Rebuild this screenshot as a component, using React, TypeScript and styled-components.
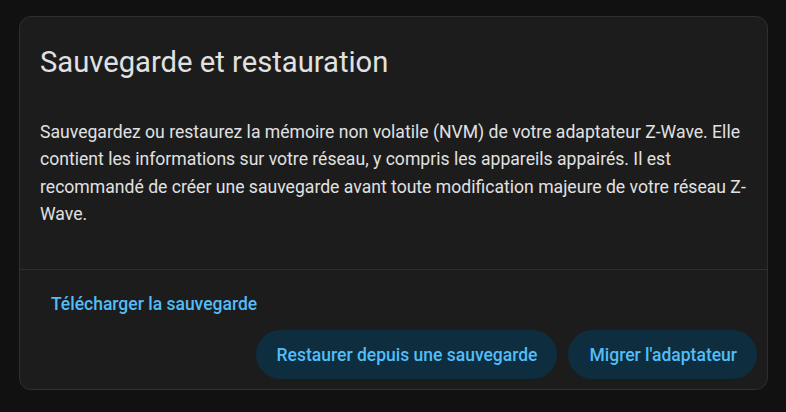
import styled, { createGlobalStyle } from "styled-components";

const GlobalStyle = createGlobalStyle`
  html, body {
    margin: 0;
    background: #111111;
    font-family: Roboto, "Noto Sans", sans-serif;
  }
`;

const Page = styled.div`
  padding: 16px 18px 0 19px;
`;

const Card = styled.section`
  background: #1c1c1c;
  border: 1px solid #2f2f2f;
  border-radius: 12px;
  display: flex;
  flex-direction: column;
`;

const Header = styled.h1`
  margin: 0;
  padding: 24px 20px 16px;
  font-size: 29.2px;
  line-height: 42px;
  font-weight: 400;
  color: #e1e1e1;
`;

const Content = styled.p`
  margin: 0;
  padding: 20px 20px 41px;
  font-size: 17.6px;
  line-height: 27.3px;
  color: #e1e1e1;
`;

const Actions = styled.div`
  border-top: 1px solid #2f2f2f;
  padding: 10px;
  display: flex;
  flex-direction: column;
  gap: 2px;
`;

const ButtonRow = styled.div`
  display: flex;
  justify-content: flex-end;
  gap: 11px;
`;

const Button = styled.button<{ filled?: boolean }>`
  height: ${({ filled }) => (filled ? "49px" : "48px")};
  padding: 0 20px 0 21px;
  border: none;
  border-radius: 999px;
  background: ${({ filled }) => (filled ? "#0e2d3f" : "transparent")};
  color: #52bdf6;
  font-family: Roboto, sans-serif;
  font-size: 17.5px;
  font-weight: 500;
  cursor: pointer;
  align-self: flex-start;
`;

export default function App() {
  return (
    <>
      <GlobalStyle />
      <Page>
        <Card>
          <Header>Sauvegarde et restauration</Header>
          <Content>
            Sauvegardez ou restaurez la mémoire non volatile (NVM) de votre
            adaptateur Z-Wave. Elle contient les informations sur votre réseau,
            y compris les appareils appairés. Il est recommandé de créer une
            sauvegarde avant toute modification majeure de votre réseau
            Z-Wave.
          </Content>
          <Actions>
            <Button>Télécharger la sauvegarde</Button>
            <ButtonRow>
              <Button filled>Restaurer depuis une sauvegarde</Button>
              <Button filled>Migrer l'adaptateur</Button>
            </ButtonRow>
          </Actions>
        </Card>
      </Page>
    </>
  );
}
